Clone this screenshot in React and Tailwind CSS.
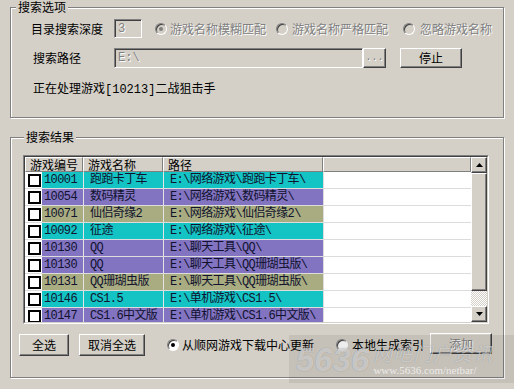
import React from "react";

const rows = [
  { id: "10001", name: "跑跑卡丁车", path: "E:\\网络游戏\\跑跑卡丁车\\", tone: "bg-[#14c3c3]" },
  { id: "10054", name: "数码精灵", path: "E:\\网络游戏\\数码精灵\\", tone: "bg-[#8374c2]" },
  { id: "10071", name: "仙侣奇缘2", path: "E:\\网络游戏\\仙侣奇缘2\\", tone: "bg-[#a8ac80]" },
  { id: "10092", name: "征途", path: "E:\\网络游戏\\征途\\", tone: "bg-[#14c3c3]" },
  { id: "10130", name: "QQ", path: "E:\\聊天工具\\QQ\\", tone: "bg-[#8374c2]" },
  { id: "10130", name: "QQ", path: "E:\\聊天工具\\QQ珊瑚虫版\\", tone: "bg-[#8374c2]" },
  { id: "10131", name: "QQ珊瑚虫版", path: "E:\\聊天工具\\QQ珊瑚虫版\\", tone: "bg-[#a8ac80]" },
  { id: "10146", name: "CS1.5", path: "E:\\单机游戏\\CS1.5\\", tone: "bg-[#14c3c3]" },
  { id: "10147", name: "CS1.6中文版", path: "E:\\单机游戏\\CS1.6中文版\\", tone: "bg-[#8374c2]" },
];

const mono = "font-['Liberation_Mono','Noto_Sans_CJK_SC',monospace]";
const dimText = "text-[#808080] [text-shadow:1px_1px_0_#fff]";
const raised =
  "border border-t-white border-l-white border-r-[#404040] border-b-[#404040] shadow-[inset_-1px_-1px_0_#808080] bg-[#d4d0c8]";
const sunken =
  "border border-t-[#808080] border-l-[#808080] border-r-white border-b-white shadow-[inset_1px_1px_0_#404040]";

const Radio = ({ checked = false, disabled = false }) => (
  <span
    className={`flex h-[12px] w-[12px] shrink-0 items-center justify-center rounded-full ${sunken} ${
      disabled ? "bg-[#d4d0c8]" : "bg-white"
    }`}
  >
    {checked && (
      <span className={`h-[4px] w-[4px] rounded-full ${disabled ? "bg-[#808080]" : "bg-black"}`} />
    )}
  </span>
);

const Button = ({ children, className = "", disabled = false }) => (
  <div
    className={`flex items-center justify-center ${raised} ${
      disabled ? dimText : "text-black"
    } ${className}`}
  >
    {children}
  </div>
);

const Arrow = ({ up }) => (
  <svg width="7" height="4" viewBox="0 0 7 4">
    <polygon points={up ? "3.5,0 7,4 0,4" : "0,0 7,0 3.5,4"} fill="#000" />
  </svg>
);

const Legend = ({ children }) => (
  <legend className="ml-[5px] bg-[#d4d0c8] px-[2px] text-[12px] leading-[14px] text-black">
    {children}
  </legend>
);

const groupBox =
  "ml-[10px] w-[494px] border border-[#808080] shadow-[inset_1px_1px_0_#fff,1px_1px_0_#fff]";

export default function App() {
  return (
    <div className="relative h-[389px] w-[514px] overflow-hidden bg-[#d4d0c8] font-['Noto_Sans_CJK_SC','Liberation_Sans',sans-serif] text-[12px] leading-[14px] text-black">
      <fieldset className={`${groupBox} h-[118px]`}>
        <Legend>搜索选项</Legend>

        <div className="mt-[5px] flex h-[19px] items-center pl-[20px]">
          <span className="w-[83px]">目录搜索深度</span>
          <div className={`flex h-[19px] w-[28px] items-center pl-[3px] ${sunken} ${mono} ${dimText}`}>
            3
          </div>
          <span className="ml-[13px]">
            <Radio checked disabled />
          </span>
          <span className={`ml-[3px] ${dimText}`}>游戏名称模糊匹配</span>
          <span className="ml-[10px]">
            <Radio disabled />
          </span>
          <span className={`ml-[4px] ${dimText}`}>游戏名称严格匹配</span>
          <span className="ml-[15px]">
            <Radio disabled />
          </span>
          <span className={`ml-[5px] ${dimText}`}>忽略游戏名称</span>
        </div>

        <div className="mt-[10px] flex h-[20px] items-center pl-[22px]">
          <span className="w-[81px]">搜索路径</span>
          <div className={`flex h-[20px] w-[249px] items-center pl-[3px] ${sunken} ${mono} ${dimText}`}>
            E:\
          </div>
          <Button disabled className={`h-[20px] w-[23px] ${mono} text-[10px]`}>
            ...
          </Button>
          <Button className="ml-[14px] h-[20px] w-[62px]">停止</Button>
        </div>

        <div className={`mt-[15px] pl-[22px] ${mono}`}>正在处理游戏[10213]二战狙击手</div>
      </fieldset>

      <fieldset className={`${groupBox} mt-[12px] h-[248px] pl-[8px]`}>
        <Legend>搜索结果</Legend>

        <div className="ml-[4px] mt-[11px] h-[169px] w-[466px] border border-t-[#808080] border-l-[#808080] border-r-white border-b-white">
          <div className="flex h-full border border-t-[#404040] border-l-[#404040] border-r-[#d4d0c8] border-b-[#d4d0c8] bg-white">
            <div className="flex min-w-0 flex-1 flex-col overflow-hidden">
              <div className="flex h-[15px] shrink-0 bg-[#d4d0c8]">
                {[
                  ["游戏编号", "w-[58px]"],
                  ["游戏名称", "w-[80px]"],
                  ["路径", "w-[160px]"],
                  ["", "w-[148px]"],
                ].map(([label, w], i) => (
                  <div
                    key={i}
                    className={`${w} flex h-full items-center border border-t-white border-l-white border-r-[#808080] border-b-[#808080] pl-[4px]`}
                  >
                    {label}
                  </div>
                ))}
              </div>

              {rows.map((r, i) => (
                <div
                  key={i}
                  className={`flex h-[17px] shrink-0 border-b border-[#dcdcdc] ${mono} tracking-[-0.6px] text-[#10122e]`}
                >
                  <div className="flex w-[58px] items-center bg-white">
                    <span className="ml-[3px] h-[13px] w-[13px] shrink-0 border-2 border-black bg-white" />
                    <span className={`ml-[1px] flex h-full flex-1 items-center pl-[2px] ${r.tone}`}>
                      {r.id}
                    </span>
                  </div>
                  <div className={`flex w-[80px] items-center border-l border-[#e4e4e4] pl-[6px] ${r.tone}`}>
                    {r.name}
                  </div>
                  <div className={`flex w-[160px] items-center whitespace-nowrap border-l border-[#e4e4e4] pl-[6px] ${r.tone}`}>
                    {r.path}
                  </div>
                  <div className="w-[148px] border-l border-[#dcdcdc] bg-white" />
                </div>
              ))}
            </div>

            <div className="flex w-[16px] shrink-0 flex-col">
              <div className={`flex h-[16px] items-center justify-center ${raised}`}>
                <Arrow up />
              </div>
              <div className={`h-[118px] ${raised}`} />
              <div className="flex-1 bg-[repeating-conic-gradient(#d4d0c8_0%_25%,#ffffff_0%_50%)] bg-[length:2px_2px]" />
              <div className={`flex h-[16px] items-center justify-center ${raised}`}>
                <Arrow />
              </div>
            </div>
          </div>
        </div>

        <div className="mt-[10px] flex h-[22px] items-center">
          <Button className="h-[22px] w-[50px]">全选</Button>
          <Button className="ml-[10px] h-[22px] w-[66px]">取消全选</Button>
          <span className="ml-[22px]">
            <Radio checked />
          </span>
          <span className="ml-[3px]">从顺网游戏下载中心更新</span>
          <span className="ml-[22px]">
            <Radio />
          </span>
          <span className="ml-[4px]">本地生成索引</span>
          <Button disabled className="mb-[3px] ml-[6px] h-[21px] w-[62px]">
            添加
          </Button>
        </div>
      </fieldset>

      {/* watermark */}
      <div className="pointer-events-none absolute left-[289px] top-[335px] flex h-[48px] w-[225px] items-center bg-black/[0.07]">
        <span className="ml-[7px] font-['Liberation_Sans',sans-serif] text-[33px] font-bold italic leading-none text-white/55 [text-shadow:0_0_1px_rgba(0,0,0,0.35)]">
          5636
        </span>
        <div className="ml-[4px] flex flex-col">
          <span className="text-[19px] italic leading-[22px] tracking-[1px] text-white/55 [text-shadow:0_0_1px_rgba(0,0,0,0.35)]">
            网吧门户资讯
          </span>
          <span className="font-['Liberation_Serif',serif] text-[11px] leading-[12px] text-white/70">
            www.5636.com/netbar/
          </span>
        </div>
      </div>
    </div>
  );
}
